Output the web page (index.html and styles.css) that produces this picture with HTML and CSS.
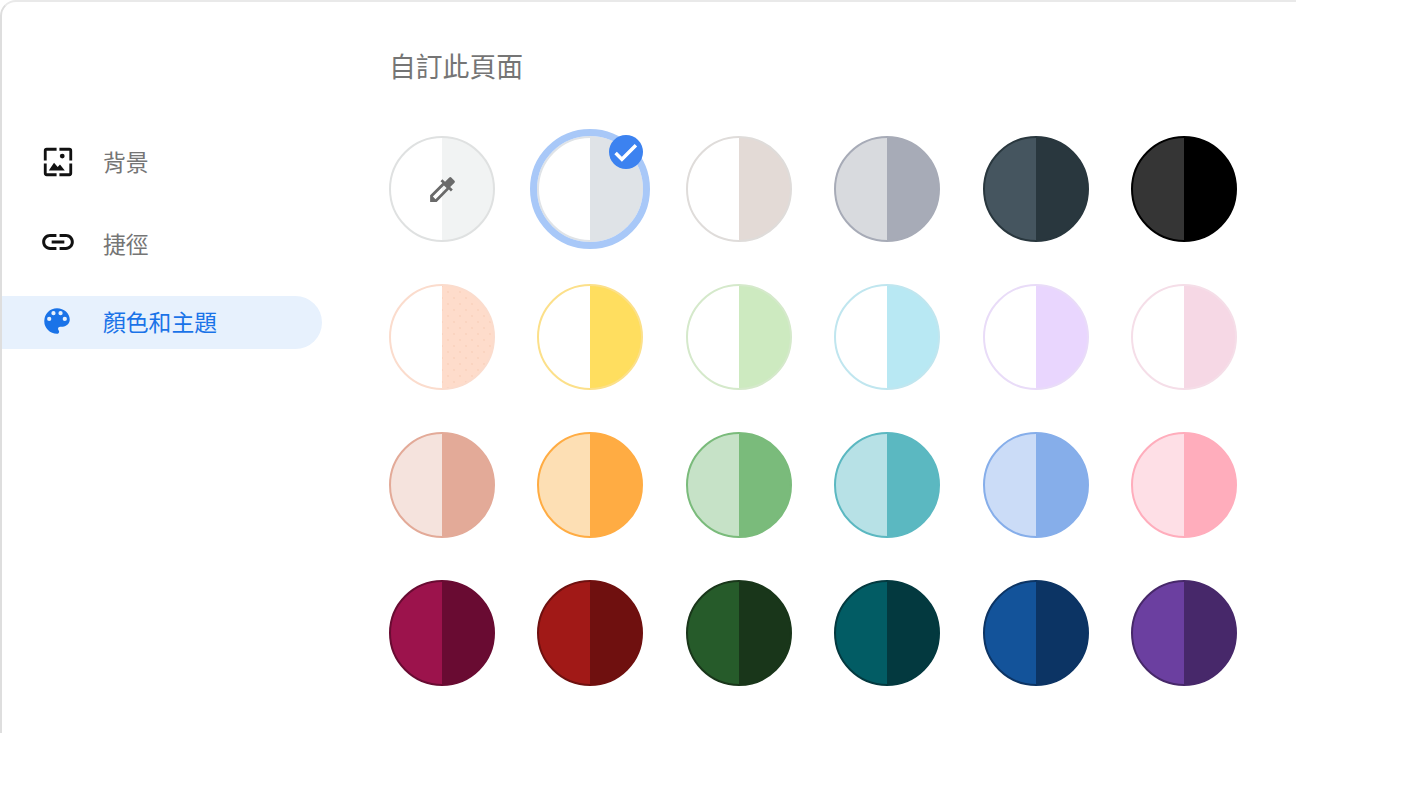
FILE: index.html
```html
<!DOCTYPE html>
<html lang="zh-Hant">
<head>
<meta charset="utf-8">
<title>自訂此頁面</title>
<link rel="stylesheet" href="styles.css">
</head>
<body>
<div class="frame">
  <nav class="side">
    <div class="item item-bg">
      <svg class="icon bg" viewBox="0 0 24 24"><path d="M4 2h7v2H4v7H2V4a2 2 0 0 1 2-2zm9 0h7a2 2 0 0 1 2 2v7h-2V4h-7V2zM2 13h2v7h7v2H4a2 2 0 0 1-2-2v-7zm18 0h2v7a2 2 0 0 1-2 2h-7v-2h7v-7z"/><path d="M5.5 18 9.2 12.6l2.6 3 1.6-1.9 3.4 4.3z"/><circle cx="15" cy="7.8" r="1.7"/></svg>
      <span>背景</span>
    </div>
    <div class="item item-link">
      <svg class="icon link" viewBox="0 0 24 24"><path d="M3.9 12c0-1.71 1.39-3.1 3.1-3.1h4V7H7c-2.76 0-5 2.24-5 5s2.24 5 5 5h4v-1.9H7c-1.71 0-3.1-1.39-3.1-3.1zM8 13h8v-2H8v2zm9-6h-4v1.9h4c1.71 0 3.1 1.39 3.1 3.1s-1.39 3.1-3.1 3.1h-4V17h4c2.76 0 5-2.24 5-5s-2.24-5-5-5z"/></svg>
      <span>捷徑</span>
    </div>
    <div class="item active">
      <svg class="icon palette" viewBox="0 0 24 24"><path d="M12 3a9 9 0 0 0 0 18c.83 0 1.5-.67 1.5-1.5 0-.39-.15-.74-.39-1.01-.23-.26-.38-.61-.38-.99 0-.83.67-1.5 1.5-1.5H16c2.76 0 5-2.24 5-5 0-4.42-4.03-8-9-8zm-5.5 9a1.5 1.5 0 1 1 0-3 1.5 1.5 0 0 1 0 3zm3-4a1.5 1.5 0 1 1 0-3 1.5 1.5 0 0 1 0 3zm5 0a1.5 1.5 0 1 1 0-3 1.5 1.5 0 0 1 0 3zm3 4a1.5 1.5 0 1 1 0-3 1.5 1.5 0 0 1 0 3z"/></svg>
      <span>顏色和主題</span>
    </div>
  </nav>
  <main class="main">
    <h1 class="title">自訂此頁面</h1>
    <div class="grid">
      <div class="sw c1"><svg class="dropper" viewBox="0 0 24 24"><path d="m20.71 5.63-2.34-2.34a1 1 0 0 0-1.41 0l-3.12 3.12-1.93-1.91-1.41 1.41 1.42 1.42L3 16.25V21h4.75l8.92-8.92 1.42 1.42 1.41-1.41-1.92-1.92 3.12-3.12a1 1 0 0 0 .01-1.42zM6.92 19 5 17.08l8.06-8.06 1.92 1.92L6.92 19z"/></svg></div>
      <div class="sw c2 selected"><span class="badge"><svg viewBox="0 0 24 24"><path d="M9 16.17 4.83 12l-1.42 1.41L9 19 21 7l-1.41-1.41z"/></svg></span></div>
      <div class="sw c3"></div>
      <div class="sw c4"></div>
      <div class="sw c5"></div>
      <div class="sw c6"></div>
      <div class="sw c7"></div>
      <div class="sw c8"></div>
      <div class="sw c9"></div>
      <div class="sw c10"></div>
      <div class="sw c11"></div>
      <div class="sw c12"></div>
      <div class="sw c13"></div>
      <div class="sw c14"></div>
      <div class="sw c15"></div>
      <div class="sw c16"></div>
      <div class="sw c17"></div>
      <div class="sw c18"></div>
      <div class="sw c19"></div>
      <div class="sw c20"></div>
      <div class="sw c21"></div>
      <div class="sw c22"></div>
      <div class="sw c23"></div>
      <div class="sw c24"></div>
    </div>
  </main>
</div>
</body>
</html>
```
FILE: styles.css
```css
* { box-sizing: border-box; }
html, body { margin: 0; padding: 0; background: #fff; }
body {
  width: 1401px;
  height: 786px;
  overflow: hidden;
  font-family: "Liberation Sans", "Noto Sans CJK TC", sans-serif;
}
.frame {
  display: flex;
  width: 1296px;
  height: 733px;
  border-top: 2px solid #e9e9e9;
  border-left: 2px solid #dedede;
  border-top-left-radius: 16px;
}
.side {
  width: 386px;
  flex: none;
  padding-top: 134px;
}
.item {
  display: flex;
  align-items: center;
  width: 320px;
  height: 53px;
  padding-left: 40px;
  gap: 29px;
  font-size: 22.8px;
  line-height: 49px;
  color: #757575;
}
.item span { margin-top: 2px; }
.item-link { margin-top: 29px; }
.item.active {
  margin-top: 25px;
  color: #1a73e8;
  background: #e7f1fd;
  border-radius: 0 27px 27px 0;
}
.icon {
  width: 32px;
  height: 32px;
  flex: none;
  fill: #111;
}
.icon.bg { width: 34px; height: 34px; margin: -1px -1px 0 -1px; }
.icon.link { width: 38px; height: 38px; margin: -5px -3px 0 -3px; }
.icon.palette { width: 34px; height: 34px; margin: -3px 0 0 -2px; fill: #1a73e8; }
.main {
  flex: 1;
  min-width: 0;
  padding-left: 1px;
}
.title {
  margin: 0;
  height: 134px;
  padding-top: 47px;
  font-size: 26.8px;
  line-height: 38px;
  font-weight: 400;
  color: #757575;
}
.grid {
  display: grid;
  grid-template-columns: repeat(6, 106px);
  grid-auto-rows: 106px;
  column-gap: 42.4px;
  row-gap: 42px;
}
.sw {
  position: relative;
  display: flex;
  align-items: center;
  justify-content: center;
  border-radius: 50%;
  border: 2px solid var(--r);
  background: linear-gradient(90deg, var(--a) 50%, var(--b) 50%) border-box;
}
.selected::before {
  content: "";
  position: absolute;
  inset: -9px;
  border-radius: 50%;
  border: 7px solid #a8c8f8;
}
.badge {
  position: absolute;
  top: -3px;
  right: -1.5px;
  display: flex;
  align-items: center;
  justify-content: center;
  width: 34px;
  height: 34px;
  border-radius: 50%;
  background: #3c82f0;
}
.badge svg {
  width: 29px;
  height: 29px;
  fill: #fff;
  stroke: #fff;
  stroke-width: 0.9;
}
.dropper { width: 33px; height: 33px; fill: #6a6a6a; }

.c1 { --a: #fff; --b: #f1f3f3; --r: #dfe1e1; }
.c2 { --a: #fff; --b: #dfe3e7; --r: #dfe3e7; }
.c3 { --a: #fff; --b: #e3dad6; --r: #dfdcda; }
.c4 { --a: #d8dade; --b: #a7abb7; --r: #a7abb7; }
.c5 { --a: #45555f; --b: #29373e; --r: #29373e; }
.c6 { --a: #353535; --b: #000; --r: #000; }
.c7 { --a: #fff; --b: #fedccb; --r: #fbdccd; }
.c7::after {
  content: "";
  position: absolute;
  top: 0;
  right: 0;
  bottom: 0;
  left: 50%;
  border-radius: 0 51px 51px 0;
  background:
    radial-gradient(circle, #fad3c0 0.7px, transparent 1.1px) 0 0 / 12px 12px,
    radial-gradient(circle, #fad3c0 0.7px, transparent 1.1px) 6px 6px / 12px 12px;
}
.c8 { --a: #fff; --b: #ffde5f; --r: #fce08a; }
.c9 { --a: #fff; --b: #cdeac0; --r: #d5e9cb; }
.c10 { --a: #fff; --b: #b8e8f3; --r: #c0e6ef; }
.c11 { --a: #fff; --b: #e9d6fe; --r: #e9dcf8; }
.c12 { --a: #fff; --b: #f6d8e5; --r: #f5dee8; }
.c13 { --a: #f5e3dd; --b: #e3aa98; --r: #e3aa98; }
.c14 { --a: #fddfb4; --b: #ffac43; --r: #ffac43; }
.c15 { --a: #c6e2c7; --b: #7abb7b; --r: #7abb7b; }
.c16 { --a: #b7e1e6; --b: #5bb8c1; --r: #5bb8c1; }
.c17 { --a: #cbdcf7; --b: #86aeea; --r: #86aeea; }
.c18 { --a: #fedfe6; --b: #ffadbc; --r: #ffadbc; }
.c19 { --a: #9c134c; --b: #690b32; --r: #690b32; }
.c20 { --a: #a11917; --b: #6f100f; --r: #6f100f; }
.c21 { --a: #265b2a; --b: #19361a; --r: #19361a; }
.c22 { --a: #025c64; --b: #03393f; --r: #03393f; }
.c23 { --a: #13539a; --b: #0c3464; --r: #0c3464; }
.c24 { --a: #6b3fa0; --b: #47286a; --r: #47286a; }
```
